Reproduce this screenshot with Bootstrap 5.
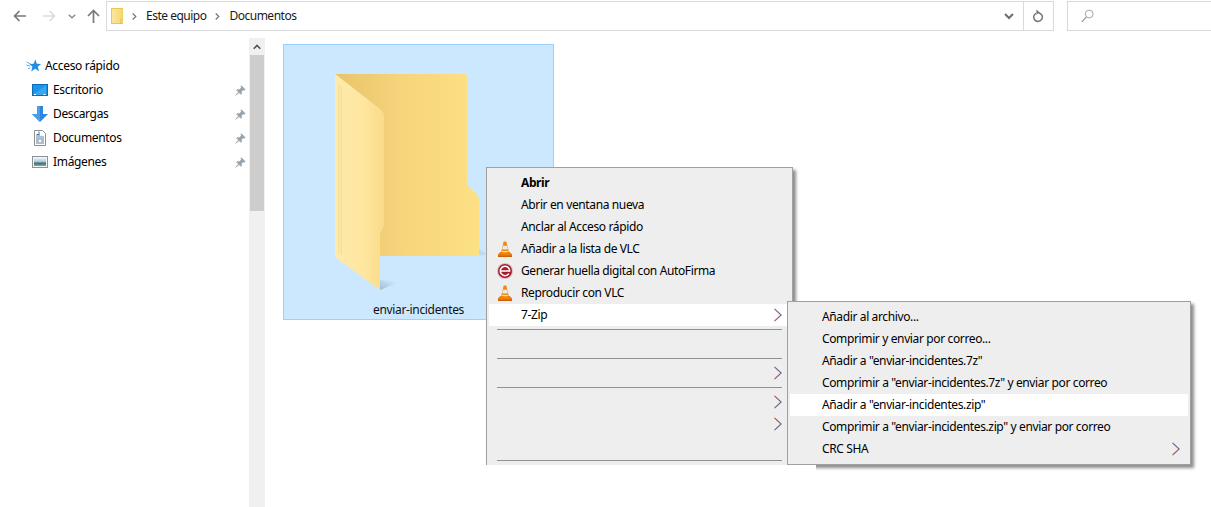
<!DOCTYPE html>
<html lang="es">
<head>
<meta charset="utf-8">
<title>Documentos</title>
<link rel="stylesheet" href="https://cdn.jsdelivr.net/npm/bootstrap@5.3.0/dist/css/bootstrap.min.css">
<style>
html,body{height:100%;}
body{font-family:"Noto Sans",sans-serif;font-size:12px;line-height:16px;color:#000;background:#fff;overflow:hidden;letter-spacing:-.33px;}
.win{width:1211px;height:507px;overflow:hidden;}
.topbar{height:38px;padding:1px 0 0 4px;}
.navbtn{height:30px;padding:0;border:0;border-radius:0;flex:none;}
.w30{width:30px}.w16{width:16px}.w26{width:26px}
.addr{width:948px;height:30px;border:1px solid #d9d9d9;flex:none;}
.addr-main{padding-left:4px;gap:9px;}
.crumb{color:#1a1a1a;letter-spacing:-.5px;}
.drop-cell{width:30px;height:28px;border-left:1px solid #d9d9d9;flex:none;}
.drop-arrow{width:29px;height:28px;flex:none;}
.searchbox{width:160px;height:30px;margin-left:13px;border:1px solid #d9d9d9;border-right:0;padding-left:13px;flex:none;}
.main{height:469px;}
.side{width:249px;padding-top:16px;flex:none;}
.side-row{height:24px;background:transparent;border:0;padding:0 3px 0 32px;color:#000;letter-spacing:-.33px;font-size:12px;}
.side-row.head{padding-left:26px;}
.side-ico{width:16px;height:16px;margin-right:5px;flex:none;}
.head .side-ico{width:15px;margin-right:4px;}
.scroll{width:16px;flex:none;background:#f0f0f0;}
.scroll-btn{height:17px;}
.scroll-thumb{height:156px;background:#cdcdcd;margin:0 1px;}
.content{padding:6px 0 0 18px;}
.tile{width:271px;height:276px;background:#cce8ff;border:1px solid #99d1ff;padding-top:27px;}
.tile svg{display:block;}
.tile-name{margin-top:6px;color:#111;}
.ctx.dropdown-menu{--bs-dropdown-min-width:0;font-size:12px;color:#000;background:#eee;border:1px solid #a0a0a0;border-radius:0;padding:4px 2px;margin:0;box-shadow:3px 3px 3px rgba(0,0,0,.45);}
.ctx-main.dropdown-menu{left:486px;top:167px;width:307px;height:298px;border-bottom:0;padding-bottom:0;overflow:visible;z-index:1000;clip-path:inset(0 -8px 0 -8px);}
.ctx-sub.dropdown-menu{left:787px;top:301px;width:404px;height:164px;z-index:1001;clip-path:polygon(0 0,calc(100% + 8px) 0,calc(100% + 8px) calc(100% + 8px),29px calc(100% + 8px),29px 100%,0 100%);}
.ctx .dropdown-item{height:22px;line-height:22px;padding:0 8px;color:#000;letter-spacing:-.37px;display:flex;align-items:center;background:transparent;}
.ctx .dropdown-item.hot{background:#fff;}
.ctx .dropdown-item.strong{font-weight:700;letter-spacing:-.4px;}
.ctx .dropdown-divider{margin:3px 8px;border-top:1px solid #919191;opacity:1;height:0;}
.slot{width:16px;height:16px;margin-right:8px;flex:none;}
.sub-pad{width:24px;flex:none;}
.chev{width:8px;height:14px;margin-left:auto;flex:none;}
</style>
</head>
<body>
<svg width="0" height="0" class="position-absolute">
  <defs>
    <symbol id="chev" viewBox="0 0 8 14">
      <path d="M.1 1 6.6 7 .1 13" fill="none" stroke="#d8502a" stroke-width=".6"/>
      <path d="M1.1 1 7.6 7 1.1 13" fill="none" stroke="#2a70d0" stroke-width=".6"/>
      <path d="M.6 1 7.1 7 .6 13" fill="none" stroke="#402040" stroke-width=".5"/>
    </symbol>
    <symbol id="pin" viewBox="0 0 12 12">
      <path d="M7 .8 11.2 5 10 5.8 9 5.2 6.9 7.6 7.3 9.6 6.3 10.2 1.9 5.8 2.5 4.8 4.6 5.2 7 3 6.4 2z" fill="#97a2aa" stroke="#97a2aa" stroke-width=".6"/>
      <path d="M3.8 7.9.8 11.2 4.2 8.4z" fill="#97a2aa" stroke="#97a2aa" stroke-width=".8"/>
    </symbol>
    <symbol id="vlc" viewBox="0 0 16 16">
      <path d="M1 13.2 3.4 11h9.2l2.4 2.2V16H1z" fill="#e87c0c"/>
      <path d="M1 14.6h14V16H1z" fill="#c86408"/>
      <path d="M6.7.6h2.6L12.3 12.5c-1.3 1-7.3 1-8.6 0z" fill="#f08a0e"/>
      <path d="M6 4.4c1.1.5 2.9.5 4 0l.9 3.5c-1.6.8-4.2.8-5.8 0z" fill="#e8e8e8"/>
      <path d="M4.6 9.4c1.7.8 5.1.8 6.8 0l.3 1.2c-1.9.8-5.5.8-7.4 0z" fill="#e8e8e8" opacity=".9"/>
    </symbol>
    <linearGradient id="gBack" x1="0" x2="1" y1="0" y2="0"><stop offset="0" stop-color="#e8c36a"/><stop offset=".45" stop-color="#f6d47b"/><stop offset="1" stop-color="#fde085"/></linearGradient>
    <linearGradient id="gFront" x1="0" x2="1" y1="0" y2="0"><stop offset="0" stop-color="#ffeaab"/><stop offset=".6" stop-color="#fee69f"/><stop offset="1" stop-color="#fadb88"/></linearGradient>
    <linearGradient id="gShadow" x1="0" x2="1" y1="1" y2="0"><stop offset="0" stop-color="#9fbdd8"/><stop offset=".8" stop-color="#cce8ff"/></linearGradient>
    <linearGradient id="gSmall" x1="0" x2="1" y1="0" y2="0"><stop offset="0" stop-color="#fbe7a2"/><stop offset="1" stop-color="#f6d671"/></linearGradient>
    <linearGradient id="gSky" x1="0" x2="0" y1="0" y2="1"><stop offset="0" stop-color="#e8f0f8"/><stop offset=".5" stop-color="#9fc4dc"/><stop offset=".62" stop-color="#3f6a55"/><stop offset="1" stop-color="#7ea7bd"/></linearGradient>
  </defs>
</svg>

<div class="win position-relative">
  <div class="topbar d-flex align-items-start">
    <button class="btn navbtn w30 d-flex align-items-center justify-content-center" aria-label="Atrás">
      <svg width="13" height="12" viewBox="0 0 13 12"><path d="M13 6H2M6.5 1 1.5 6l5 5" fill="none" stroke="#7a7a7a" stroke-width="1.7"/></svg>
    </button>
    <button class="btn navbtn w30 d-flex align-items-center justify-content-center" aria-label="Adelante">
      <svg width="13" height="12" viewBox="0 0 13 12"><path d="M0 6h11M6.5 1l5 5-5 5" fill="none" stroke="#dcdcdc" stroke-width="1.7"/></svg>
    </button>
    <button class="btn navbtn w16 d-flex align-items-center justify-content-center" aria-label="Recientes">
      <svg width="8" height="5" viewBox="0 0 8 5"><path d="M.7.7 4 3.8 7.3.7" fill="none" stroke="#8a8a8a" stroke-width="1.3"/></svg>
    </button>
    <button class="btn navbtn w26 d-flex align-items-center justify-content-center" aria-label="Subir">
      <svg width="13" height="14" viewBox="0 0 13 14"><path d="M6.5 14V2M1 7l5.5-5.5L12 7" fill="none" stroke="#7a7a7a" stroke-width="1.7"/></svg>
    </button>
    <div class="addr d-flex align-items-center">
      <div class="addr-main d-flex align-items-center flex-grow-1">
        <svg width="12" height="16" viewBox="0 0 12 16"><rect x=".5" y=".5" width="11.5" height="15" fill="url(#gSmall)" stroke="#ecc750"/><path d="M9.5 15.5V11.5H12" fill="none" stroke="#ecc750"/></svg>
        <svg width="5" height="7" viewBox="0 0 5 7"><path d="M.7.5 3.8 3.5.7 6.5" fill="none" stroke="#777" stroke-width="1.2"/></svg>
        <span class="crumb">Este equipo</span>
        <svg width="5" height="7" viewBox="0 0 5 7"><path d="M.7.5 3.8 3.5.7 6.5" fill="none" stroke="#777" stroke-width="1.2"/></svg>
        <span class="crumb">Documentos</span>
      </div>
      <div class="drop-arrow d-flex align-items-center justify-content-center">
        <svg width="10" height="7" viewBox="0 0 10 7"><path d="M1 1 5 5 9 1" fill="none" stroke="#6d6d6d" stroke-width="2"/></svg>
      </div>
      <div class="drop-cell d-flex align-items-center justify-content-center">
        <svg width="11" height="14" viewBox="0 0 11 14"><path d="M3 4.3a4.3 4.3 0 1 0 3-.4" fill="none" stroke="#767676" stroke-width="1.5"/><path d="M3.4 .6 7 3.8 3.4 5.4z" fill="#767676"/></svg>
      </div>
    </div>
    <div class="searchbox d-flex align-items-center">
      <svg width="13" height="14" viewBox="0 0 13 14"><circle cx="8.2" cy="5" r="3.9" fill="none" stroke="#a8a2a0" stroke-width="1"/><path d="M5.4 8 .8 13" fill="none" stroke="#8a7f90" stroke-width="1.1"/></svg>
    </div>
  </div>

  <div class="main d-flex">
    <nav class="side">
      <ul class="list-group list-group-flush">
        <li class="list-group-item side-row head d-flex align-items-center">
          <svg class="side-ico" viewBox="0 0 15 15"><path d="M9.4 1 10.8 5.2 15 5.4 11.8 8.2 13 12.8 9.2 10.2 5.2 13 6.4 8.2 3.4 5.6 7.6 5.2z" fill="#1f8fe6"/><path d="M.6 3.6 4.4 5.4M.4 6.6 4 7.6M2 10.2 4.6 9.4" stroke="#5fb0ee" stroke-width="1"/></svg>
          <span>Acceso rápido</span>
        </li>
        <li class="list-group-item side-row d-flex align-items-center">
          <svg class="side-ico" viewBox="0 0 16 16"><rect x=".5" y="2.5" width="15" height="11" fill="#1b95ea" stroke="#0d6cb4"/><path d="M1 13 14 3.2V13z" fill="#3aa6f0"/><path d="M2 12.5h2M11.5 12.5h2" stroke="#fff" stroke-width="1"/></svg>
          <span>Escritorio</span>
          <svg class="ms-auto" width="11" height="11"><use href="#pin"/></svg>
        </li>
        <li class="list-group-item side-row d-flex align-items-center">
          <svg class="side-ico" viewBox="0 0 16 16"><path d="M5 0h6v8h5l-8 8-8-8h5z" fill="#2f87dc"/><path d="M5 0h3v16l-8-8h5z" fill="#4b9de6"/></svg>
          <span>Descargas</span>
          <svg class="ms-auto" width="11" height="11"><use href="#pin"/></svg>
        </li>
        <li class="list-group-item side-row d-flex align-items-center">
          <svg class="side-ico" viewBox="0 0 16 16"><path d="M2.5.5h8l3 3v12h-11z" fill="#fff" stroke="#8f8f8f"/><path d="M4 5h4M4 7h8M4 9h8M4 11h3M9 11h3M4 13h8" stroke="#5f7f9c" stroke-width="1"/><path d="M7 1.5v3H5" fill="none" stroke="#2a7fd0"/></svg>
          <span>Documentos</span>
          <svg class="ms-auto" width="11" height="11"><use href="#pin"/></svg>
        </li>
        <li class="list-group-item side-row d-flex align-items-center">
          <svg class="side-ico" viewBox="0 0 16 16"><rect x=".5" y="2.5" width="15" height="11" fill="#f4f4f4" stroke="#8f8f8f"/><rect x="2" y="4" width="12" height="8" fill="url(#gSky)"/></svg>
          <span>Imágenes</span>
          <svg class="ms-auto" width="11" height="11"><use href="#pin"/></svg>
        </li>
      </ul>
    </nav>
    <div class="scroll d-flex flex-column">
      <div class="scroll-btn d-flex align-items-center justify-content-center">
        <svg width="8" height="6" viewBox="0 0 8 6"><path d="M.7 4.8 4 1.4 7.3 4.8" fill="none" stroke="#505050" stroke-width="1.5"/></svg>
      </div>
      <div class="scroll-thumb"></div>
    </div>
    <div class="content flex-grow-1">
      <div class="tile d-flex flex-column align-items-center">
        <svg width="171" height="224" viewBox="333 72 171 224">
          <path d="M380 280 400 282 380 290z" fill="url(#gShadow)"/>
          <path d="M479 249 487 254 479 256z" fill="#bcdaf2"/>
          <path d="M335 74H464.5Q467 74 467 76.5V185L477.5 195Q479 197 479 199V253.5Q479 256 476.5 256H380V233L384 225V116L382 111z" fill="url(#gBack)"/>
          <path d="M335 74 380.5 109.5Q384 112 384 117V225L380 233V290L335 257z" fill="url(#gFront)"/>
          <path d="M339 84V254M341.5 86V255.5" stroke="#f6dc93" stroke-width=".9" fill="none"/>
        </svg>
        <div class="tile-name">enviar-incidentes</div>
      </div>
    </div>
  </div>

  <div class="ctx ctx-main dropdown-menu show">
    <a class="dropdown-item strong" href="#"><span class="slot"></span>Abrir</a>
    <a class="dropdown-item" href="#"><span class="slot"></span>Abrir en ventana nueva</a>
    <a class="dropdown-item" href="#"><span class="slot"></span>Anclar al Acceso rápido</a>
    <a class="dropdown-item" href="#"><svg class="slot"><use href="#vlc"/></svg>Añadir a la lista de VLC</a>
    <a class="dropdown-item" href="#"><svg class="slot" viewBox="0 0 16 16"><circle cx="8" cy="8" r="8" fill="#dcbcc0"/><circle cx="8" cy="8" r="7" fill="#a31d2e"/><path d="M11.9 10.6A4.7 4.7 0 1 1 12.7 8H3.3" fill="none" stroke="#fff" stroke-width="1.5"/></svg>Generar huella digital con AutoFirma</a>
    <a class="dropdown-item" href="#"><svg class="slot"><use href="#vlc"/></svg>Reproducir con VLC</a>
    <a class="dropdown-item hot" href="#"><span class="slot"></span>7-Zip<svg class="chev"><use href="#chev"/></svg></a>
    <hr class="dropdown-divider">
    <div class="dropdown-item"></div>
    <hr class="dropdown-divider">
    <div class="dropdown-item"><svg class="chev"><use href="#chev"/></svg></div>
    <hr class="dropdown-divider">
    <div class="dropdown-item"><svg class="chev"><use href="#chev"/></svg></div>
    <div class="dropdown-item"><svg class="chev"><use href="#chev"/></svg></div>
    <div class="dropdown-item"></div>
    <hr class="dropdown-divider">
  </div>

  <div class="ctx ctx-sub dropdown-menu show">
    <a class="dropdown-item" href="#"><span class="sub-pad"></span>Añadir al archivo...</a>
    <a class="dropdown-item" href="#"><span class="sub-pad"></span>Comprimir y enviar por correo...</a>
    <a class="dropdown-item" href="#"><span class="sub-pad"></span>Añadir a "enviar-incidentes.7z"</a>
    <a class="dropdown-item" href="#"><span class="sub-pad"></span>Comprimir a "enviar-incidentes.7z" y enviar por correo</a>
    <a class="dropdown-item hot" href="#"><span class="sub-pad"></span>Añadir a "enviar-incidentes.zip"</a>
    <a class="dropdown-item" href="#"><span class="sub-pad"></span>Comprimir a "enviar-incidentes.zip" y enviar por correo</a>
    <a class="dropdown-item" href="#"><span class="sub-pad"></span>CRC SHA<svg class="chev"><use href="#chev"/></svg></a>
  </div>
</div>
<script src="https://cdn.jsdelivr.net/npm/bootstrap@5.3.0/dist/js/bootstrap.bundle.min.js"></script>
</body>
</html>
